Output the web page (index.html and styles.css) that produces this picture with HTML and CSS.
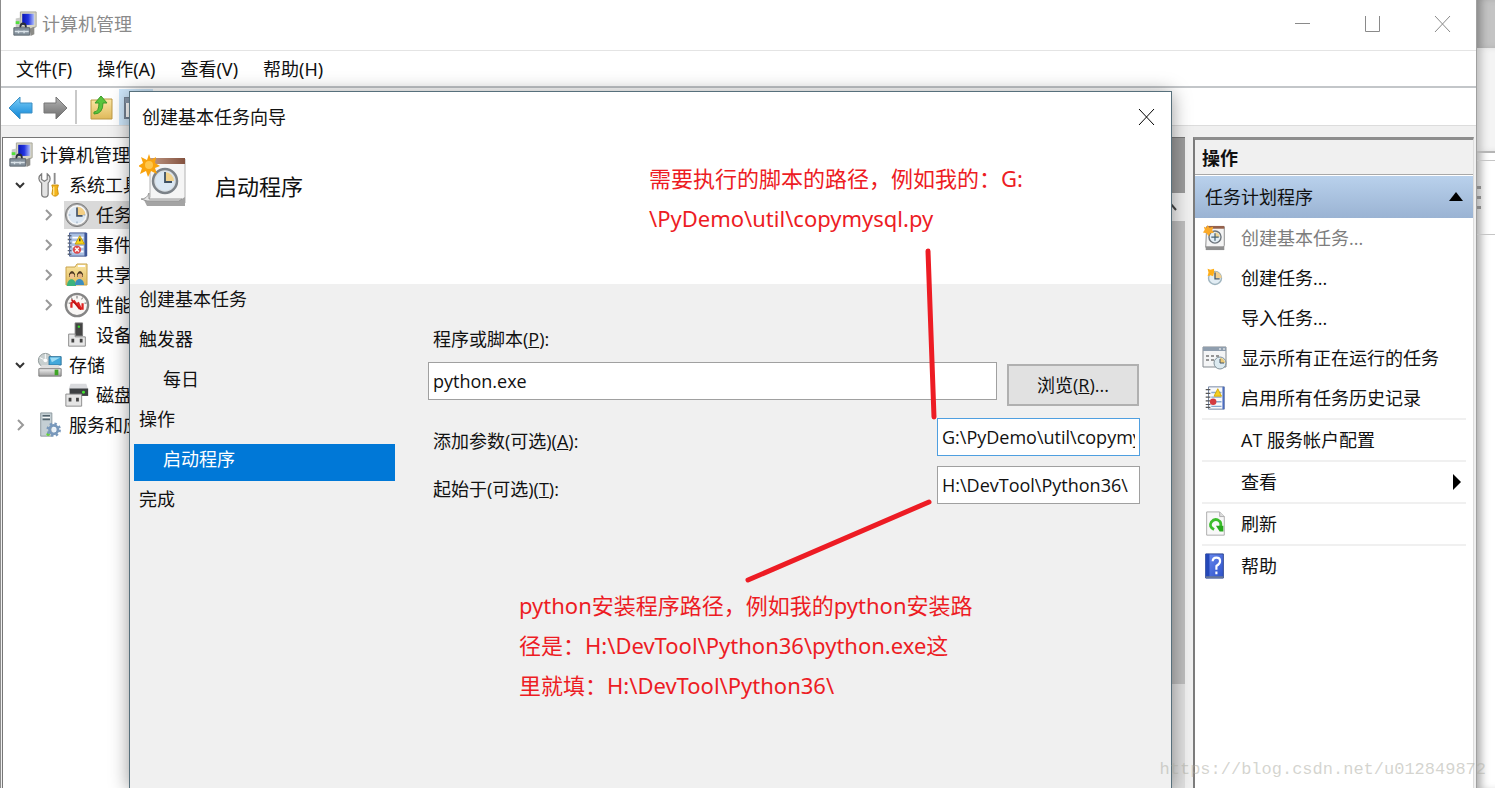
FILE: index.html
```html
<!DOCTYPE html>
<html lang="zh-CN">
<head>
<meta charset="utf-8">
<title>计算机管理</title>
<link rel="stylesheet" href="styles.css">
</head>
<body>
<svg class="defs" aria-hidden="true">
  <defs>
    <linearGradient id="gBlue" x1="0" y1="0" x2="0" y2="1"><stop offset="0" stop-color="#7fd0f8"/><stop offset="1" stop-color="#0a83d6"/></linearGradient>
    <linearGradient id="gGray" x1="0" y1="0" x2="0" y2="1"><stop offset="0" stop-color="#b4b4b4"/><stop offset="1" stop-color="#6c6c6c"/></linearGradient>
    <linearGradient id="gScreen" x1="0" y1="0" x2="1" y2="0"><stop offset="0" stop-color="#0a16b4"/><stop offset=".5" stop-color="#2334e0"/><stop offset="1" stop-color="#b5c3fa"/></linearGradient>
    <linearGradient id="gFolder" x1="0" y1="0" x2="0" y2="1"><stop offset="0" stop-color="#fbe7a6"/><stop offset="1" stop-color="#dfb95a"/></linearGradient>
    <linearGradient id="gBook" x1="0" y1="0" x2="1" y2="1"><stop offset="0" stop-color="#6d8cf0"/><stop offset="1" stop-color="#2b50c8"/></linearGradient>
    <linearGradient id="gMetal" x1="0" y1="0" x2="0" y2="1"><stop offset="0" stop-color="#f2f2f2"/><stop offset="1" stop-color="#9b9b9b"/></linearGradient>
    <linearGradient id="gRoll" x1="0" y1="0" x2="1" y2="0"><stop offset="0" stop-color="#c19a86"/><stop offset="1" stop-color="#84523f"/></linearGradient>
  </defs>
  <symbol id="computer" viewBox="0 0 26 28">
    <path d="M8 1h17v16l-6 2-11-3z" fill="#d8d6c4" stroke="#a3a399"/>
    <path d="M10 3h13v12H10z" fill="url(#gScreen)"/>
    <path d="M18 19l5-2v8l-4 2z" fill="#8c8c88"/>
    <path d="M3 8l5-1v12H3z" fill="#c9cbc8"/><path d="M3 11h4v3H3z" fill="#52e03c"/>
    <path d="M8 18c0-6 6-6 6 0" fill="none" stroke="#2b2f36" stroke-width="2"/>
    <path d="M1 18h17v8H1z" fill="#84919c" stroke="#5c666e"/>
    <path d="M2 22h15M6 21v3M12 21v3" stroke="#d9e2e8" stroke-width="1.5"/>
  </symbol>
  <symbol id="tools" viewBox="0 0 26 28">
    <path d="M4 2v6l3 2 3-2V2c4 3 4 7 1 10v12c0 4-7 4-7 0V12C0 9 0 5 4 2z" fill="#e3e3e3" stroke="#7d7d7d" stroke-width="1.3"/>
    <path d="M18 1v12" stroke="#8b8b8b" stroke-width="2"/>
    <path d="M15 14h7l-1 4 1 6q-3.500 4-7 0l1-6z" fill="#f4b51c" stroke="#c98b09"/>
    <path d="M17 16v9" stroke="#ffe48a" stroke-width="1.500"/>
  </symbol>
  <symbol id="clock" viewBox="0 0 28 28">
    <circle cx="14" cy="14" r="12.500" fill="#a6a6a6" stroke="#7a7a7a"/>
    <circle cx="14" cy="14" r="10" fill="#dde8f3" stroke="#f8f8f8" stroke-width="1.500"/>
    <path d="M14 14V5a9 9 0 0 1 9 9z" fill="#f4cf85"/>
    <path d="M14 6v9h6" fill="none" stroke="#44546a" stroke-width="1.800"/>
    <path d="M14 21v2M5 14h2M21 14h2" stroke="#8ba0b8"/>
  </symbol>
  <symbol id="events" viewBox="0 0 24 28">
    <path d="M4 1h18v25H4z" fill="#a9bfe2" stroke="#41558f"/><path d="M20 1h3v25h-3z" fill="#3e5799"/>
    <path d="M7 6h12M7 11h12M7 16h12M7 21h12" stroke="#fff" stroke-width="2"/>
    <path d="M2 4h4M2 8h4M2 12h4M2 16h4M2 20h4M2 24h4" stroke="#5b6475" stroke-width="1.500"/>
    <path d="M15 4l5 9H10z" fill="#f7d419" stroke="#c39b0c"/><path d="M15 7v3" stroke="#333" stroke-width="1.500"/>
    <circle cx="12" cy="19" r="4.500" fill="#dd4a4c"/><path d="M10 17l4 4M14 17l-4 4" stroke="#fff" stroke-width="1.400"/>
  </symbol>
  <symbol id="share" viewBox="0 0 24 26">
    <path d="M1 5h9l2-3h10v21H1z" fill="url(#gFolder)" stroke="#c8a24b"/><path d="M13 4h7" stroke="#fff" stroke-width="2"/>
    <path d="M4 12q3-6 6 0v3H4zM12 12q3-6 6 0v3h-6z" fill="#4d3822"/>
    <circle cx="7" cy="14" r="2.500" fill="#f1c392"/><circle cx="15" cy="14" r="2.500" fill="#e7b680"/>
    <path d="M2 24c0-9 9-9 9 0z" fill="#3cb37c"/><path d="M10 23c0-8 9-8 9 0z" fill="#3b8dc0"/>
  </symbol>
  <symbol id="perf" viewBox="0 0 28 28">
    <circle cx="14" cy="14" r="12" fill="#f8f6f4" stroke="#858585" stroke-width="2.500"/>
    <path d="M8 17v-5l3-2 6 8M15 11l3 7h2v-6" fill="none" stroke="#dd2222" stroke-width="2.400"/><path d="M8 8l10 11" stroke="#b11" stroke-width="1.500"/>
    <path d="M14 4v3M5 12h2M22 12h2M8 6l1 2M20 6l-1 2" stroke="#666"/>
  </symbol>
  <symbol id="device" viewBox="0 0 24 28">
    <path d="M10 1h8v14h-8z" fill="#454545" stroke="#777"/><circle cx="14" cy="5" r="1.300" fill="#38e02b"/>
    <path d="M3 13h7v3h11v10H3z" fill="#e7e7e7" stroke="#888"/><path d="M6 18h3v4H6zM15 18h3v4h-3z" fill="#444"/>
  </symbol>
  <symbol id="storage" viewBox="0 0 26 28">
    <circle cx="8" cy="9" r="7.500" fill="#c8cfcf" stroke="#8a9494"/><circle cx="8" cy="9" r="2" fill="#fff"/><path d="M8 2v5M2 6l4 2" stroke="#fff"/>
    <path d="M12 5h13v9H12z" fill="#42a8db" stroke="#2e7197"/><path d="M13 6h11l-9 5z" fill="#9cdcf5"/>
    <path d="M4 14h18l3 5H1z" fill="#dedede"/><path d="M1 18h24v8H1z" fill="url(#gMetal)" stroke="#797979"/><path d="M18 19h4v6h-4z" fill="#3fa526"/>
  </symbol>
  <symbol id="disk" viewBox="0 0 26 28">
    <path d="M6 2h17l2 6H4z" fill="#d9dadd"/><path d="M5 7h20v8H5z" fill="#3d4042"/><circle cx="20" cy="11" r="1.600" fill="#41e330"/>
    <path d="M1 13h17v13H1z" fill="#e4e4e4" stroke="#898989"/><path d="M4 17h3v4H4zM12 17h3v4h-3z" fill="#444"/>
  </symbol>
  <symbol id="services" viewBox="0 0 24 28">
    <path d="M2 1h12v25H2z" fill="#c4cfd4" stroke="#8b979d"/><path d="M4 4h8M4 8h8" stroke="#52636d" stroke-width="1.800"/><path d="M4 6h8" stroke="#fff"/><circle cx="10" cy="24" r="1.800" fill="#65d533"/>
    <circle cx="16" cy="19" r="4.500" fill="none" stroke="#7898bb" stroke-width="3"/><circle cx="16" cy="19" r="6.500" fill="none" stroke="#7898bb" stroke-width="2.500" stroke-dasharray="2.600 2.500"/><circle cx="16" cy="19" r="2.500" fill="#e8f0f8"/>
  </symbol>
  <symbol id="wizard" viewBox="0 0 48 54">
    <path d="M11 5h35v44H8l3-6z" fill="#f5f5f5" stroke="#b2b2b2"/>
    <path d="M10 4h36v6H10z" fill="url(#gRoll)"/><path d="M5 46h36l5-3v9H8z" fill="#a4a4a4"/><path d="M2 45q6 0 8-6v6h33l-3 2H8z" fill="#e6e6e6" stroke="#979797"/>
    <circle cx="26" cy="27" r="12" fill="#d9dfe4" stroke="#7c8288" stroke-width="2.500"/><circle cx="26" cy="27" r="9.500" fill="#dbe8f4"/>
    <path d="M26 27v-9a9 9 0 0 1 9 9z" fill="#f2d28b"/><path d="M26 18v10h7" fill="none" stroke="#3e5164" stroke-width="1.800"/>
    <path d="M10 0l2 6 5-3-1 6 5 3-5 2 2 6-6-3-3 6-2-6-6 3 2-6-4-2 5-3-2-6 6 3z" fill="#f9a30d"/><circle cx="10" cy="11" r="4" fill="#ffc64b"/>
  </symbol>
  <symbol id="wizardsmall" viewBox="0 0 26 28">
    <path d="M4 2h19v20l-1 2H3z" fill="#f4f4f4" stroke="#888"/><path d="M4 1h19v3H4z" fill="#95614c"/><path d="M3 23h20v4H3z" fill="#8e8e8e"/>
    <circle cx="13" cy="13" r="6.500" fill="#e2edf4" stroke="#6d757c" stroke-width="1.500"/><path d="M13 13V8a5 5 0 0 1 5 5z" fill="#f0d596"/><path d="M13 9v8M9 13h8" stroke="#46606e" stroke-width="1.300"/>
    <path d="M5 0l2 3 4-1-1 4 2 2-4 1-2 3-2-3-4-1 2-3-1-3 3 1z" fill="#fbaa28"/>
  </symbol>
  <symbol id="newtask" viewBox="0 0 24 28">
    <circle cx="12" cy="14" r="7" fill="#e2edf4" stroke="#9fb4bf" stroke-width="1.500"/><path d="M12 14V7a7 7 0 0 1 7 7z" fill="#f2cf8f"/><path d="M12 8v7h5" fill="none" stroke="#465562" stroke-width="1.400"/>
    <path d="M4 4l3 1 4-1v4l-1 4-3-1-3 1 1-4z" fill="#ffae18"/>
  </symbol>
  <symbol id="running" viewBox="0 0 26 26">
    <path d="M1 2h23v20H1z" fill="#f4f5f6" stroke="#83898f"/><path d="M1 2h23v4H1z" fill="#8f9eae"/><path d="M17 4h2M21 4h2" stroke="#fff"/>
    <path d="M4 11h3M9 11h3M14 11h3M4 15h3M9 15h3" stroke="#777" stroke-width="1.300"/>
    <circle cx="18" cy="18" r="6" fill="#dceaf0" stroke="#83929b"/><path d="M18 18v-5a5 5 0 0 1 5 5z" fill="#eccb79"/><path d="M18 14v4h4" fill="none" stroke="#456"/>
  </symbol>
  <symbol id="history" viewBox="0 0 24 28">
    <path d="M5 2h17v24H5z" fill="#f8f9fb" stroke="#6d7f9f"/><path d="M20 2h2v24h-2z" fill="#4b6cc0"/><path d="M8 8h11M8 13h11M8 18h11M8 23h11" stroke="#87a9cf" stroke-width="1.500"/>
    <path d="M2 5h5M2 9h5M2 13h5M2 17h5M2 21h5M2 24h5" stroke="#555" stroke-width="1.300"/><path d="M15 4l4 8h-8z" fill="#f5cf20" stroke="#cfa80a"/><circle cx="10" cy="18" r="3.500" fill="#d33b3f"/>
  </symbol>
  <symbol id="refresh" viewBox="0 0 24 28">
    <path d="M3 1h14l5 5v20H3z" fill="#f8f8f8" stroke="#aaa"/><path d="M17 1v5h5" fill="#ddd" stroke="#aaa"/>
    <path d="M11 20q-6-3-3-8 4-5 9-1 2 2 1 6" fill="none" stroke="#3cbd2c" stroke-width="3"/><path d="M13 16h8v6h-4z" fill="#27a91c"/>
  </symbol>
  <symbol id="help" viewBox="0 0 24 28">
    <path d="M2 1h19v26H2z" fill="url(#gBook)" stroke="#2a438f"/><path d="M2 1h4v26H2z" fill="#2448b8"/><path d="M2 25h19v2H2z" fill="#66779a"/>
    <path d="M9.500 9q0-4 4-4t4 3.500q0 3-4 5.500v4M13.500 20v3" fill="none" stroke="#fff" stroke-width="2.300"/>
  </symbol>
</svg>

<div class="desktop">
  <main class="window">
    <header class="titlebar">
      <svg class="ico"><use href="#computer"/></svg>
      <h1 class="window-title">计算机管理</h1>
      <div class="window-buttons">
        <button class="win-btn" aria-label="最小化"><svg class="glyph" viewBox="0 0 16 16"><path d="M0 7.500h15"/></svg></button>
        <button class="win-btn" aria-label="最大化"><svg class="glyph" viewBox="0 0 16 16"><path d="M.5 0v15.500h14V0"/></svg></button>
        <button class="win-btn" aria-label="关闭"><svg class="glyph" viewBox="0 0 16 16"><path d="M0 0l15 16M15 0L0 16"/></svg></button>
      </div>
    </header>
    <nav class="menubar">
      <button class="menu">文件(F)</button><button class="menu">操作(A)</button><button class="menu">查看(V)</button><button class="menu">帮助(H)</button>
    </nav>
    <div class="toolbar">
      <button class="tool" aria-label="后退"><svg class="arrow" viewBox="0 0 26 26"><path d="M1 13L12 2v6h12v10H12v6z" fill="url(#gBlue)" stroke="#3c8fc4"/></svg></button>
      <button class="tool" aria-label="前进"><svg class="arrow" viewBox="0 0 26 26"><path d="M25 13L14 2v6H2v10h12v6z" fill="url(#gGray)" stroke="#777"/></svg></button>
      <span class="tool-sep"></span>
      <button class="tool" aria-label="上一级"><svg class="arrow" viewBox="0 0 26 26"><path d="M3 5h10l2-1h9v20H3z" fill="url(#gFolder)" stroke="#bd9944"/><path d="M6 17q5 0 5-9H7l6-7 6 7h-4q0 11-9 11z" fill="#58c43c" stroke="#3c9b29"/></svg></button>
      <button class="tool tool-on" aria-label="显示树"><svg class="arrow" viewBox="0 0 26 26"><path d="M2 3h22v20H2z" fill="#fff" stroke="#758394" stroke-width="2"/><path d="M2 3h22v5H2z" fill="#8a9aac"/></svg></button>
    </div>
    <div class="workspace">
      <ul class="tree">
        <li class="node"><svg class="ico"><use href="#computer"/></svg>计算机管理</li>
        <li class="node lvl1"><svg class="chev open" viewBox="0 0 12 12"><path d="M2 4l4 4 4-4"/></svg><svg class="ico"><use href="#tools"/></svg>系统工具</li>
        <li class="node lvl2"><svg class="chev" viewBox="0 0 12 12"><path d="M4 1l5 5-5 5"/></svg><span class="hit"><svg class="ico"><use href="#clock"/></svg>任务</span></li>
        <li class="node lvl2"><svg class="chev" viewBox="0 0 12 12"><path d="M4 1l5 5-5 5"/></svg><svg class="ico"><use href="#events"/></svg>事件</li>
        <li class="node lvl2"><svg class="chev" viewBox="0 0 12 12"><path d="M4 1l5 5-5 5"/></svg><svg class="ico"><use href="#share"/></svg>共享</li>
        <li class="node lvl2"><svg class="chev" viewBox="0 0 12 12"><path d="M4 1l5 5-5 5"/></svg><svg class="ico"><use href="#perf"/></svg>性能</li>
        <li class="node lvl2"><span class="chev"></span><svg class="ico"><use href="#device"/></svg>设备</li>
        <li class="node lvl1"><svg class="chev open" viewBox="0 0 12 12"><path d="M2 4l4 4 4-4"/></svg><svg class="ico"><use href="#storage"/></svg>存储</li>
        <li class="node lvl2"><span class="chev"></span><svg class="ico"><use href="#disk"/></svg>磁盘</li>
        <li class="node lvl1"><svg class="chev" viewBox="0 0 12 12"><path d="M4 1l5 5-5 5"/></svg><svg class="ico"><use href="#services"/></svg>服务和应</li>
      </ul>
      <div class="content">
        <div class="content-head"></div>
        <div class="scroll-up"><svg class="scroll-arrow" viewBox="0 0 12 12"><path d="M1 9l5-6 5 6"/></svg></div>
        <div class="scroll-thumb"></div>
      </div>
      <aside class="actions">
        <h2 class="actions-title">操作</h2>
        <div class="actions-group">任务计划程序<svg class="tri" viewBox="0 0 14 10"><path d="M0 9l7-9 7 9z"/></svg></div>
        <div class="actions-list">
          <button class="action" disabled><svg class="ico"><use href="#wizardsmall"/></svg>创建基本任务...</button>
          <button class="action"><svg class="ico"><use href="#newtask"/></svg>创建任务...</button>
          <button class="action"><span class="ico"></span>导入任务...</button>
          <button class="action"><svg class="ico"><use href="#running"/></svg>显示所有正在运行的任务</button>
          <button class="action"><svg class="ico"><use href="#history"/></svg>启用所有任务历史记录</button>
          <button class="action ruled"><span class="ico"></span>AT 服务帐户配置</button>
          <button class="action ruled"><span class="ico"></span>查看<svg class="more" viewBox="0 0 8 16"><path d="M0 0l8 8-8 8z"/></svg></button>
          <button class="action ruled"><svg class="ico"><use href="#refresh"/></svg>刷新</button>
          <button class="action ruled"><svg class="ico"><use href="#help"/></svg>帮助</button>
        </div>
      </aside>
    </div>
  </main>
  <div class="behind">
    <div class="behind-title"></div><div class="behind-bar"></div><div class="behind-row"></div>
    <div class="behind-menu"><i></i><i></i><i></i></div>
  </div>

  <section class="dialog" role="dialog" aria-labelledby="dlg-title">
    <header class="dialog-head">
      <div class="dialog-bar">
        <h2 class="dialog-title" id="dlg-title">创建基本任务向导</h2>
        <button class="dialog-close" aria-label="关闭"><svg class="glyph" viewBox="0 0 16 16"><path d="M0 0l15 16M15 0L0 16"/></svg></button>
      </div>
      <div class="dialog-hero"><svg class="hero-ico"><use href="#wizard"/></svg><h3 class="hero-title">启动程序</h3></div>
    </header>
    <div class="dialog-body">
      <ol class="steps">
        <li class="step">创建基本任务</li>
        <li class="step">触发器</li>
        <li class="step sub">每日</li>
        <li class="step">操作</li>
        <li class="step sub active"><span class="step-hit">启动程序</span></li>
        <li class="step">完成</li>
      </ol>
      <form class="form">
        <label class="label" for="prog">程序或脚本(<u>P</u>):</label>
        <div class="prog-row">
          <input class="field" id="prog" type="text" value="python.exe">
          <button class="browse" type="button">浏览(<u>R</u>)...</button>
        </div>
        <div class="pair"><label class="label" for="args">添加参数(可选)(<u>A</u>):</label><input class="field focus" id="args" type="text" value="G:\PyDemo\util\copymysql.py"></div>
        <div class="pair"><label class="label" for="cwd">起始于(可选)(<u>T</u>):</label><input class="field" id="cwd" type="text" value="H:\DevTool\Python36\"></div>
      </form>
    </div>
    <svg class="strokes" aria-hidden="true"><path d="M798 159l6 166M799 410L618 488"/></svg>
    <p class="note note-args">需要执行的脚本的路径，例如我的：G:<br>\PyDemo\util\copymysql.py</p>
    <p class="note note-cwd">python安装程序路径，例如我的python安装路<br>径是：H:\DevTool\Python36\python.exe这<br>里就填：H:\DevTool\Python36\</p>
  </section>
  <span class="watermark">https://blog.csdn.net/u012849872</span>
</div>
</body>
</html>
```

FILE: styles.css
```css
* { box-sizing: border-box; }
body {
  margin: 0;
  background: #fff;
  color: #111;
  font: 18px/30px "Open Sans", "Noto Sans CJK SC", sans-serif;
}
h1, h2, h3, p, ul, ol { margin: 0; padding: 0; font-size: inherit; font-weight: 400; }
ul, ol { list-style: none; }
button { padding: 0; border: 0; background: none; color: inherit; font: inherit; }
svg { display: block; }
.defs { position: absolute; width: 0; height: 0; }
.ico { flex: none; width: 26px; height: 26px; }
.glyph { width: 16px; height: 16px; fill: none; stroke: currentColor; overflow: visible; }

.desktop {
  position: relative;
  display: grid;
  grid-template-columns: 1fr 18px;
  height: calc(100vh - 2px);
  overflow: hidden;
}
.window {
  display: flex;
  flex-direction: column;
  min-width: 0;
  border-left: 1px solid #8c8c8c;
  border-right: 1px solid #a0a0a0;
  background: #fff;
}

.titlebar {
  display: flex;
  align-items: center;
  gap: 4px;
  height: 51px;
  padding: 0 11px 2px 11px;
  border-bottom: 1px solid #e4e4e4;
  color: #8a8a8a;
}
.window-buttons { display: flex; margin-left: auto; }
.win-btn { display: flex; align-items: center; justify-content: center; width: 45px; height: 40px; margin-left: 25px; }

.menubar { display: flex; gap: 25px; height: 37px; padding: 3px 15px; border-bottom: 2px solid #c3c6c9; font-family: "Noto Sans", "Noto Sans CJK SC", sans-serif; }

.toolbar { display: flex; align-items: center; height: 38px; border-bottom: 1px solid #dcdcdc; padding-left: 3px; }
.tool { display: flex; align-items: center; justify-content: center; width: 34px; height: 36px; padding-top: 2px; }
.tool-sep { width: 2px; height: 34px; margin: 0 7px 0 3px; background: #c9c9c9; }
.tool-on { margin-left: 1px; background: #cde6fa; }
.arrow { width: 26px; height: 26px; }

.workspace {
  display: grid;
  grid-template-columns: 128px 1fr 281px;
  flex: 1;
  min-height: 0;
  padding: 11px 2px 0 1px;
  background: #f0f0f0;
  column-gap: 8px;
}
.tree { padding-top: 2px; border-top: 1px solid #777; border-left: 1px solid #777; background: #fff; overflow: hidden; white-space: nowrap; }
.node { display: flex; align-items: center; gap: 6px; height: 30px; padding-left: 5px; }
.chev { flex: none; width: 12px; height: 12px; fill: none; stroke: #999; stroke-width: 2; }
.chev.open { stroke: #333; }
.lvl1 { padding-left: 11px; }
.lvl1 .chev { margin-right: 5px; }
.lvl2 { padding-left: 39px; }
.lvl2 > .chev { margin-right: 4px; }
.hit { display: flex; align-items: center; gap: 6px; height: 28px; padding-right: 6px; background: #d9d9d9; }

.content { display: flex; flex-direction: column; border-top: 1px solid #777; background: #dfdfdf; }
.content-head { height: 55px; background: #9b9b9b; }
.scroll-up { display: flex; justify-content: flex-end; align-items: center; height: 28px; padding-right: 6px; background: #efefef; }
.scroll-arrow { width: 16px; height: 12px; fill: none; stroke: #444; stroke-width: 2; }
.scroll-thumb { height: 463px; background: #bebebe; }

.actions { border-left: 2px solid #7c7c7c; border-top: 3px solid #8d8d8d; border-right: 1px solid #ddd; background: #fff; }
.actions-title { height: 35px; padding: 3px 7px; border-bottom: 1px solid #a8a8a8; background: #f0f0f0; font-weight: 700; }
.actions-group {
  display: flex;
  align-items: center;
  justify-content: space-between;
  height: 42px;
  margin-top: 1px;
  padding: 2px 10px;
  background: linear-gradient(#b9d1ec, #9ab3d3);
}
.tri { width: 14px; height: 10px; }
.actions-list { padding: 0 7px; }
.action { display: flex; align-items: center; gap: 13px; width: 100%; height: 40px; text-align: left; white-space: nowrap; }
.action:disabled { color: #7d7d7d; }
.ruled { height: 42px; border-top: 2px solid #f0f0f0; }
.more { width: 8px; height: 16px; margin-left: auto; margin-right: 5px; }

.behind { box-shadow: inset 8px 0 8px -4px #aaa; }
.behind-title { height: 48px; background: #c4c4c4; box-shadow: inset 8px 0 8px -4px #888; }
.behind-bar { height: 105px; border-bottom: 2px solid #b5b5b5; background: #f4f4f4; box-shadow: inset 8px 0 8px -4px #bbb; }
.behind-row { height: 8px; border-bottom: 1px solid #c5c5c5; }
.behind-menu { display: flex; flex-direction: column; gap: 7px; height: 74px; padding-top: 25px; border-bottom: 1px solid #c5c5c5; }
.behind-menu i { width: 4px; height: 3px; background: #888; }

.dialog {
  position: absolute;
  inset: 91px 323px 0 129px;
  display: flex;
  flex-direction: column;
  border: 1px solid #57707c;
  border-bottom: 0;
  background: #f0f0f0;
  box-shadow: 0 2px 18px rgba(0, 0, 0, .4);
}
.dialog-head { height: 192px; background: #fff; }
.dialog-bar { display: flex; align-items: center; justify-content: space-between; height: 50px; padding: 0 16px 0 12px; }
.dialog-close { width: 16px; height: 16px; color: #000; }
.dialog-hero { display: flex; align-items: center; gap: 28px; padding: 12px 9px; }
.hero-ico { width: 48px; height: 54px; }
.hero-title { padding-top: 10px; font-size: 22px; }
.dialog-body { display: grid; grid-template-columns: 261px 1fr; column-gap: 33px; padding: 0 31px 0 4px; }
.step { height: 40px; padding-left: 5px; }
.sub { padding-left: 29px; }
.sub.active { padding-left: 0; }
.step-hit { display: block; height: 37px; padding-left: 29px; background: #0078d7; color: #fff; }
.form { padding-top: 40px; }
.label { display: block; height: 38px; padding-left: 5px; }
.prog-row { display: flex; gap: 10px; margin-bottom: 12px; padding-right: 1px; }
.field {
  width: 203px;
  height: 38px;
  padding: 0 4px;
  border: 1px solid #a0a0a0;
  border-radius: 0;
  background: #fff;
  color: #111;
  font: inherit;
  outline: 0;
}
.prog-row .field { flex: 1; width: auto; min-width: 0; }
.field.focus { border-color: #4f9fe0; }
.browse { width: 132px; height: 42px; margin-top: 2px; border: 2px solid #b0b0b0; background: #e1e1e1; }
.pair { display: flex; align-items: flex-end; justify-content: space-between; margin-bottom: 10px; }
.pair .label { height: 30px; }

.strokes { position: absolute; inset: 0; width: 100%; height: 100%; fill: none; stroke: #ed1c24; stroke-width: 5; stroke-linecap: round; pointer-events: none; }
.note { position: absolute; color: #ed1c24; font: 22px/40px "Noto Sans", "Noto Sans CJK SC", sans-serif; white-space: nowrap; }
.note-args { left: 519px; top: 66px; }
.note-cwd { left: 389px; top: 493px; }
.watermark { position: absolute; right: 9px; bottom: 2px; color: rgba(170, 170, 160, .5); font: 17px/32px "Liberation Mono", monospace; }
```
